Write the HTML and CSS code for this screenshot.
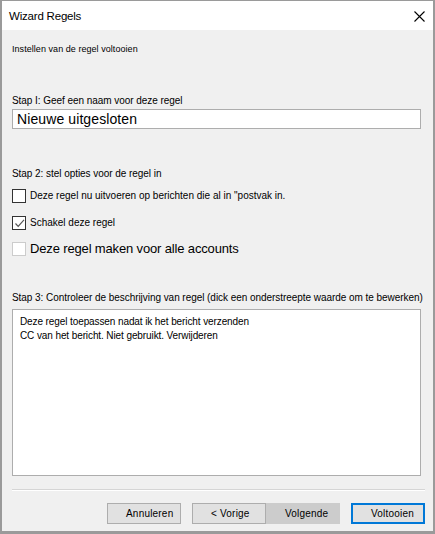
FILE: index.html
```html
<!DOCTYPE html>
<html>
<head>
<meta charset="utf-8">
<link rel="stylesheet" href="styles.css">
</head>
<body>
<div class="window">
  <div class="titlebar">
    <span class="title">Wizard Regels</span>
    <svg class="close" width="11" height="11" viewBox="0 0 11 11"><path d="M0.5 0.5 L10.5 10.5 M10.5 0.5 L0.5 10.5" stroke="#000" stroke-width="1.1" fill="none"/></svg>
  </div>
  <div class="content">
    <div class="intro">Instellen van de regel voltooien</div>
    <div class="label step1">Stap I: Geef een naam voor deze regel</div>
    <div class="input">Nieuwe uitgesloten</div>
    <div class="label step2">Stap 2: stel opties voor de regel in</div>
    <div class="cbrow row1"><span class="cb"></span><span class="cbtext">Deze regel nu uitvoeren op berichten die al in "postvak in.</span></div>
    <div class="cbrow row2"><span class="cb checked"><svg width="11" height="11" viewBox="0 0 11 11"><path d="M1.5 5.5 L4.2 8.3 L10 1.8" stroke="#555" stroke-width="1.2" fill="none"/></svg></span><span class="cbtext">Schakel deze regel</span></div>
    <div class="cbrow row3"><span class="cb disabled"></span><span class="cbtext big">Deze regel maken voor alle accounts</span></div>
    <div class="label step3">Stap 3: Controleer de beschrijving van regel (dick een onderstreepte waarde om te bewerken)</div>
    <div class="desc">
      <div>Deze regel toepassen nadat ik het bericht verzenden</div>
      <div>CC van het bericht. Niet gebruikt. Verwijderen</div>
    </div>
    <div class="separator"></div>
    <div class="buttons">
      <span class="btn">Annuleren</span>
      <span class="pair"><span class="btn">&lt; Vorige</span><span class="btn pressed">Volgende</span></span>
      <span class="btn default">Voltooien</span>
    </div>
  </div>
</div>
</body>
</html>
```
FILE: styles.css
```css
* { box-sizing: border-box; }
html, body { margin: 0; padding: 0; }
body {
  width: 435px;
  height: 534px;
  font-family: "Liberation Sans", Arial, sans-serif;
  color: #000;
}
.window {
  width: 435px;
  height: 534px;
  border-style: solid;
  border-color: #9a9a9a;
  border-width: 1px 2px 3px 2px;
  background: #f0f0f0;
  display: flex;
  flex-direction: column;
}
.titlebar {
  height: 29px;
  background: #fff;
  display: flex;
  align-items: center;
  justify-content: space-between;
  padding: 0 8px 0 7px;
}
.title {
  font-size: 11.5px;
  letter-spacing: -0.2px;
}
.close { margin-top: 1px; }
.content {
  padding: 0 9px 0 10px;
  display: flex;
  flex-direction: column;
}
.intro {
  margin-top: 13px;
  font-size: 9px;
  line-height: 12px;
  letter-spacing: 0.05px;
}
.label {
  font-size: 10px;
  line-height: 12px;
  letter-spacing: -0.05px;
}
.step1 { margin-top: 40px; }
.input {
  margin-top: 2px;
  height: 20px;
  width: 409px;
  background: #fff;
  border: 1px solid #adadad;
  font-size: 14px;
  line-height: 18px;
  padding-left: 4px;
  letter-spacing: 0.1px;
}
.step2 { margin-top: 39px; }
.cbrow {
  display: flex;
  align-items: center;
  height: 14px;
  gap: 4px;
}
.row1 { margin-top: 9px; }
.row2 { margin-top: 13px; }
.row3 { margin-top: 12px; }
.cb {
  width: 14px;
  height: 14px;
  border: 1px solid #333;
  background: #fff;
  display: flex;
  align-items: center;
  justify-content: center;
  flex: none;
}
.cb.disabled { border-color: #cccccc; }
.cbtext {
  font-size: 10px;
  letter-spacing: 0px;
  line-height: 14px;
}
.cbtext.big {
  font-size: 13px;
  letter-spacing: -0.15px;
}
.step3 { margin-top: 36px; }
.desc {
  margin-top: 5px;
  height: 167px;
  width: 409px;
  background: #fff;
  border: 1px solid #adadad;
  padding: 5px 0 0 7px;
  font-size: 10px;
  line-height: 14px;
  letter-spacing: -0.1px;
}
.separator {
  margin-top: 13px;
  height: 2px;
  width: 413px;
  border-top: 1px solid #d5d5d5;
  border-bottom: 1px solid #fff;
}
.buttons {
  margin-top: 12px;
  display: flex;
  justify-content: flex-end;
  gap: 11px;
  width: 413px;
}
.pair { display: flex; }
.btn {
  width: 74px;
  height: 21px;
  background: #e1e1e1;
  border: 1px solid #adadad;
  font-size: 10px;
  line-height: 19px;
  padding-left: 18px;
  letter-spacing: 0.2px;
}
.btn.pressed {
  background: #cccccc;
  border-color: #cccccc;
}
.btn.default {
  border: 2px solid #0078d7;
  line-height: 17px;
  padding-left: 18px;
}
```
